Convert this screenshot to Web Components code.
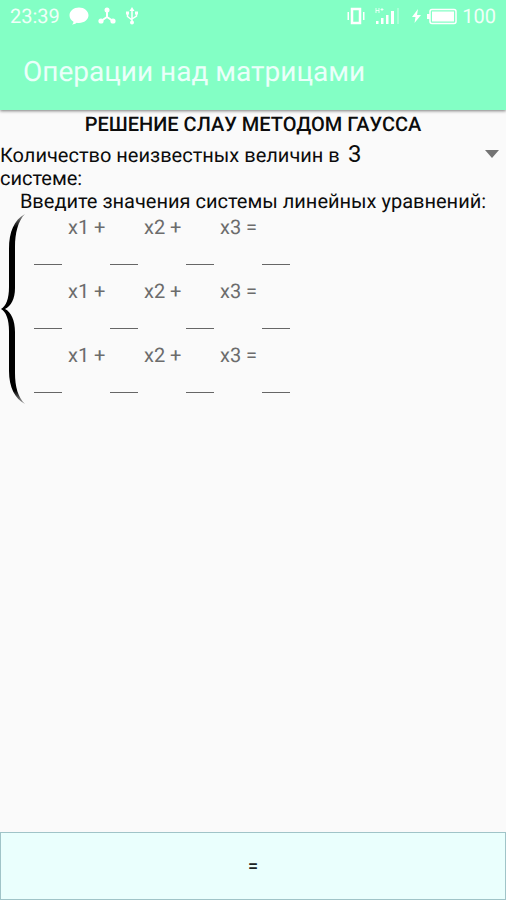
<!DOCTYPE html>
<html lang="ru">
<head>
<meta charset="utf-8">
<meta name="viewport" content="width=device-width, initial-scale=1">
<title>Операции над матрицами</title>
<style>
  html, body { height: 100%; margin: 0; }
  body { font-family: Roboto, "Noto Sans", sans-serif; font-size: 20px; line-height: 23px; color: #0c0c0c; background: #fafafa; text-rendering: geometricPrecision; }
</style>
</head>
<body>
<matrix-app></matrix-app>
<script>
const define = (name, html, setup) => customElements.define(name, class extends HTMLElement {
  constructor() {
    super();
    this.attachShadow({ mode: 'open' }).innerHTML = html;
  }
  connectedCallback() { if (setup) setup(this, this.shadowRoot); }
});

define('status-bar', `
<style>
  :host { display: flex; justify-content: space-between; align-items: center; height: 32px; padding: 0 10px; color: #effff8; font-size: 20px; line-height: 32px; }
  div { display: flex; align-items: center; }
  svg { display: block; fill: #fff; }
  .left { gap: 9px; }
  .right { gap: 10px; }
  .power { gap: 4px; }
</style>
<div class="left">
  <span>23:39</span>
  <svg width="20" height="18" viewBox="0 0 20 18"><path d="M10 .5C4.800.5.500 4 .5 8.300c0 2.700 1.500 5 4 6.500 0 1-.5 1.900-1.500 2.700 1.900 0 3.500-.7 4.700-1.700.7.1 1.500.2 2.300.2 5.200 0 9.500-3.400 9.500-7.700S15.200.5 10 .5z"/></svg>
  <svg width="18" height="18" viewBox="0 0 18 18"><path d="M9 4v6M9 10l-6 4M9 10l6 4" stroke="#fff" stroke-width="2"/><circle cx="9" cy="3" r="2.500"/><circle cx="3" cy="14" r="2.600"/><circle cx="15" cy="14" r="2.600"/></svg>
  <svg width="14" height="18" viewBox="0 0 14 18"><path d="M7 2v13M2.500 6v3.500L7 13M11.500 6v3L7 12" fill="none" stroke="#fff" stroke-width="1.500"/><path d="M7 0l2.500 4h-5zM1 4.500h3v3H1zM10 4.500h3v3h-3z"/><circle cx="7" cy="15.500" r="2"/></svg>
</div>
<div class="right">
  <svg width="18" height="18" viewBox="0 0 18 18"><path d="M5 2h8v14H5z" fill="none" stroke="#fff" stroke-width="2.500"/><path d="M.5 5h1.500v8H.5zM16 5h1.500v8H16z"/></svg>
  <svg width="26" height="18" viewBox="0 0 26 18"><path d="M1 1v5M4 1v5M1 3.500h3M5.500 2.500h3M7 1v3" stroke="#fff" fill="none" stroke-width=".8"/><path d="M1 14h2.500v3H1zM6 11h2.500v6H6zM11 8h2.500v9H11zM16 4h3v13h-3z"/><path d="M22 1h2v16h-2z" opacity=".3"/></svg>
  <div class="power">
    <svg width="11" height="14" viewBox="0 0 11 14"><path d="M7 0L1 8h3.500L3.500 14 10 6H6z"/></svg>
    <svg width="32" height="17" viewBox="0 0 32 17"><rect x="4" y="1.500" width="26" height="14" rx="2" fill="none" stroke="#fff" stroke-width="1.500"/><path d="M6 3.500h22v10H6zM1 6h3v5H1z"/></svg>
    <span>100</span>
  </div>
</div>`);

define('app-header', `
<style>
  :host { display: block; background: #83ffc5; box-shadow: 0 1px 3px rgba(0,0,0,.5); }
  h1 { margin: 0; padding: 23px 23px 22px; font-size: 28px; line-height: 33px; font-weight: 400; color: #ebfffa; }
</style>
<status-bar></status-bar>
<h1><slot></slot></h1>`);

define('unknowns-picker', `
<style>
  :host { display: flex; align-items: flex-start; padding-top: 2px; }
  label { flex: 0 1 340px; padding-top: 6px; }
  .box { flex: 1; display: grid; align-items: center; }
  select, svg { grid-area: 1 / 1; }
  select { width: 100%; height: 32px; margin: 0; padding: 0 32px 0 8px; border: 0; background: none; appearance: none; font: 24px/32px Roboto, sans-serif; color: inherit; }
  svg { justify-self: end; margin-right: 7px; fill: #737373; pointer-events: none; }
</style>
<label for="count">Количество неизвестных величин в системе:</label>
<div class="box">
  <select id="count"><option>2</option><option selected>3</option><option>4</option></select>
  <svg width="14" height="8" viewBox="0 0 14 8"><path d="M0 0h14L7 8z"/></svg>
</div>`);

define('matrix-term', `
<style>
  :host { display: flex; width: 76px; flex: none; align-items: flex-start; gap: 6px; }
  input { box-sizing: border-box; width: 28px; height: 50px; margin: 0 0 0 4px; padding: 0; border: 0; border-bottom: 1px solid #666; border-radius: 0; background: none; font: inherit; text-align: center; outline: none; }
  label { color: #6c6c6c; line-height: 24px; white-space: nowrap; }
</style>
<input id="value" type="text" inputmode="decimal">
<label for="value"><slot></slot></label>`, (host, root) => {
  if (!host.textContent) root.querySelector('input').setAttribute('aria-label', 'Свободный член');
});

define('equation-row', `
<style>
  :host { display: flex; height: 64px; }
</style>
<matrix-term>x1 +</matrix-term><matrix-term>x2 +</matrix-term><matrix-term>x3 =</matrix-term><matrix-term></matrix-term>`);

define('equation-system', `
<style>
  :host { display: flex; align-items: flex-start; }
  svg { flex: none; width: 30px; height: 192px; }
  .rows { padding-top: 2px; }
</style>
<svg viewBox="0 0 30 192" aria-hidden="true">
  <defs><linearGradient id="ink" x1="0" y1="0" x2="0" y2="1"><stop offset="0" stop-color="#999"/><stop offset=".07" stop-color="#000"/><stop offset=".93" stop-color="#000"/><stop offset="1" stop-color="#aaa"/></linearGradient></defs>
  <path fill="url(#ink)" d="M25 1C14 7 9 19 9 36V74C9 86 6 93 1 96C6 99 9 106 9 118V158C9 174 15 186 25 191C18 184 15 174 15 160V119C15 107 11 99 5 96C11 93 15 86 15 75V34C15 20 18 8 25 1Z"/>
</svg>
<div class="rows"><equation-row></equation-row><equation-row></equation-row><equation-row></equation-row></div>`);

define('solve-button', `
<style>
  :host { display: block; }
  button { display: block; width: 100%; height: 68px; margin: 0; padding: 0; border: 1px solid #a0c4c8; border-radius: 0; background: #eafffd; color: #1c2424; font: 500 18px/24px Roboto, sans-serif; }
</style>
<button type="button"><slot></slot></button>`);

define('matrix-app', `
<style>
  :host { display: flex; flex-direction: column; min-height: 100%; }
  main { flex: 1; }
  h2, p { margin: 0; text-align: center; }
  h2 { padding-top: 3px; font-size: 20px; line-height: 23px; font-weight: 500; }
</style>
<app-header>Операции над матрицами</app-header>
<main>
  <h2>РЕШЕНИЕ СЛАУ МЕТОДОМ ГАУССА</h2>
  <unknowns-picker></unknowns-picker>
  <p>Введите значения системы линейных уравнений:</p>
  <equation-system></equation-system>
</main>
<solve-button>=</solve-button>`);
</script>
</body>
</html>
